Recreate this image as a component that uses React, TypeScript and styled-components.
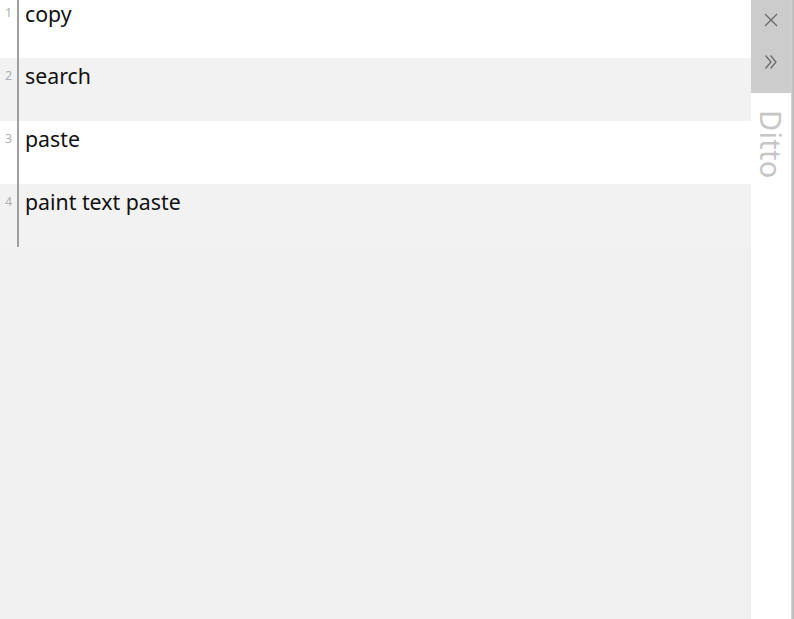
import React from "react";
import styled, { createGlobalStyle } from "styled-components";

const Global = createGlobalStyle`
  html, body { margin: 0; padding: 0; width: 794px; height: 619px; overflow: hidden; background: #f0f0f0; }
  #root { width: 794px; height: 619px; }
`;

const Window = styled.div`
  display: flex;
  width: 794px;
  height: 619px;
  font-family: "Noto Sans", "Segoe UI", sans-serif;
`;

const List = styled.div`
  width: 751px;
  height: 619px;
  background: #f0f0f0;
  overflow: hidden;
  display: flex;
  flex-direction: column;
`;

const Row = styled.div<{ $alt: boolean; $first: boolean }>`
  display: flex;
  height: ${(p) => (p.$first ? 58 : 63)}px;
  background: ${(p) => (p.$alt ? "#f2f2f2" : "#ffffff")};
`;

const Num = styled.div<{ $first: boolean }>`
  width: 17px;
  flex: none;
  border-right: 2px solid #a0a0a0;
  box-sizing: content-box;
  color: #b0b0b0;
  font-size: 12.5px;
  text-align: center;
  padding-top: ${(p) => (p.$first ? 6.5 : 11.5)}px;
  line-height: 1;
`;

const Text = styled.div<{ $first: boolean }>`
  padding: ${(p) => (p.$first ? 0 : 4)}px 0 0 6px;
  font-size: 21.3px;
  line-height: 28px;
  color: #111;
`;

const Side = styled.div`
  width: 40px;
  flex: none;
  background: #ffffff;
  display: flex;
  flex-direction: column;
`;

const Bar = styled.div`
  display: flex;
  flex-direction: column;
  align-items: center;
  background: #cccccc;
  height: 93px;
  padding-top: 12px;
  box-sizing: border-box;
  gap: 26px;
`;

const IconBtn = styled.div`
  width: 16px;
  height: 16px;
  display: flex;
  align-items: center;
  justify-content: center;
`;

const Caption = styled.div`
  writing-mode: vertical-rl;
  font-size: 29px;
  color: #c6c6c6;
  margin-top: 17px;
  margin-left: 6px;
  width: 29px;
  line-height: 1;
  letter-spacing: 0.3px;
`;

const Edge = styled.div`
  width: 3px;
  flex: none;
  background: linear-gradient(to right, #d6d6d6, #b0b0b0);
`;

const items = ["copy", "search", "paste", "paint text paste"];

export default function App() {
  return (
    <>
      <Global />
      <Window>
        <List>
          {items.map((t, i) => (
            <Row key={i} $alt={i % 2 === 1} $first={i === 0}>
              <Num $first={i === 0}>{i + 1}</Num>
              <Text $first={i === 0}>{t}</Text>
            </Row>
          ))}
        </List>
        <Side>
          <Bar>
            <IconBtn>
              <svg width="14" height="14" viewBox="0 0 14 14">
                <path d="M1 1 L13 13 M13 1 L1 13" stroke="#666" strokeWidth="1.2" fill="none" />
              </svg>
            </IconBtn>
            <IconBtn>
              <svg width="14" height="16" viewBox="0 0 14 16">
                <path d="M1.5 1.5 L7 8 L1.5 14.5 M6.5 1.5 L12 8 L6.5 14.5" stroke="#666" strokeWidth="1.2" fill="none" />
              </svg>
            </IconBtn>
          </Bar>
          <Caption>Ditto</Caption>
        </Side>
        <Edge />
      </Window>
    </>
  );
}
